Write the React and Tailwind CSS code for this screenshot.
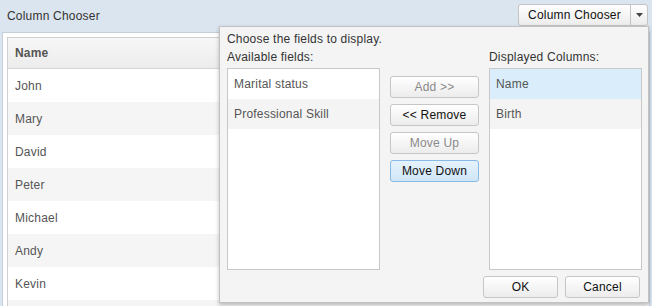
import React from 'react';

const rows = ['John', 'Mary', 'David', 'Peter', 'Michael', 'Andy', 'Kevin', ''];
const available = ['Marital status', 'Professional Skill'];
const displayed = ['Name', 'Birth'];

function Btn({ children, disabled, active, className = '' }) {
    const tone = active
        ? 'border-[#86b9e6] bg-gradient-to-b from-[#e6f3fc] to-[#cfe6f7] text-[#111]'
        : 'border-[#c6c6c6] bg-gradient-to-b from-[#ffffff] to-[#ececec]';
    return (
        <div
            className={`h-[22px] flex items-center justify-center rounded-[3px] border text-[12px] ${tone} ${disabled ? 'text-[#8a8a8a]' : 'text-[#111]'} ${className}`}
        >
            {children}
        </div>
    );
}

function FieldList({ items, selected }) {
    return (
        <div className="w-[153px] h-[202px] border border-[#c8c8c8] bg-white">
            {items.map((item, i) => (
                <div
                    key={item}
                    className={`h-[30px] flex items-center px-[6px] text-[12px] text-[#555] ${
                        i === selected ? 'bg-[#d9eefa]' : i % 2 === 1 ? 'bg-[#f4f4f4]' : 'bg-white'
                    }`}
                >
                    {item}
                </div>
            ))}
        </div>
    );
}

export default function App() {
    return (
        <div
            className="relative w-[652px] h-[306px] overflow-hidden bg-[#dbe5ef] tracking-[0.2px]"
            style={{ fontFamily: '"Liberation Sans", Arial, sans-serif' }}
        >
            {/* title bar */}
            <div className="h-[32px] flex items-center justify-between pl-[7px] pr-[4px]">
                <span className="text-[12px] text-[#333]">Column Chooser</span>
                <div className="flex h-[22px] mt-[-2px] rounded-[3px] border border-[#c4c4c4] bg-gradient-to-b from-[#ffffff] to-[#ececec]">
                    <div className="w-[112px] flex items-center justify-center text-[12px] text-[#111] border-r border-[#c4c4c4]">
                        Column Chooser
                    </div>
                    <div className="w-[16px] flex items-center justify-center">
                        <svg width="7" height="4" viewBox="0 0 7 4">
                            <path d="M0 0h7L3.5 4z" fill="#444" />
                        </svg>
                    </div>
                </div>
            </div>

            {/* grid panel */}
            <div className="mx-[2px] h-[280px] border border-[#c3d0dc] bg-white pt-[4px] pl-[4px]">
                <div className="border-l border-t border-[#d0d0d0] h-full">
                    <div className="h-[31px] flex items-center px-[7px] border-b border-[#d4d4d4] bg-gradient-to-b from-[#f7f7f7] to-[#ececec] text-[12px] font-bold text-[#555]">
                        Name
                    </div>
                    {rows.map((r, i) => (
                        <div
                            key={i}
                            className={`h-[33px] flex items-center px-[7px] text-[12px] text-[#555] ${i % 2 === 1 ? 'bg-[#f5f5f5]' : 'bg-white'}`}
                        >
                            {r}
                        </div>
                    ))}
                </div>
            </div>

            {/* column chooser popup */}
            <div className="absolute left-[219px] top-[26px] w-[430px] h-[277px] border border-[#c2c2c2] bg-[#f4f4f4] shadow-[0_2px_4px_rgba(0,0,0,0.25)] pl-[7px] pr-[6px] pt-[5px]">
                <div className="h-[14px] leading-[14px] text-[12px] text-[#333]">Choose the fields to display.</div>
                <div className="flex mt-[4px]">
                    <div>
                        <div className="h-[14px] leading-[14px] text-[12px] text-[#333] mb-[4px]">Available fields:</div>
                        <FieldList items={available} />
                    </div>
                    <div className="w-[90px] mx-[10px] pt-[26px] flex flex-col gap-[6px]">
                        <Btn disabled>Add &gt;&gt;</Btn>
                        <Btn>&lt;&lt; Remove</Btn>
                        <Btn disabled>Move Up</Btn>
                        <Btn active>Move Down</Btn>
                    </div>
                    <div>
                        <div className="h-[14px] leading-[14px] text-[12px] text-[#333] mb-[4px]">Displayed Columns:</div>
                        <FieldList items={displayed} selected={0} />
                    </div>
                </div>
                <div className="flex justify-end gap-[7px] mt-[6px] pr-[2px]">
                    <Btn className="w-[75px]">OK</Btn>
                    <Btn className="w-[75px]">Cancel</Btn>
                </div>
            </div>
        </div>
    );
}
